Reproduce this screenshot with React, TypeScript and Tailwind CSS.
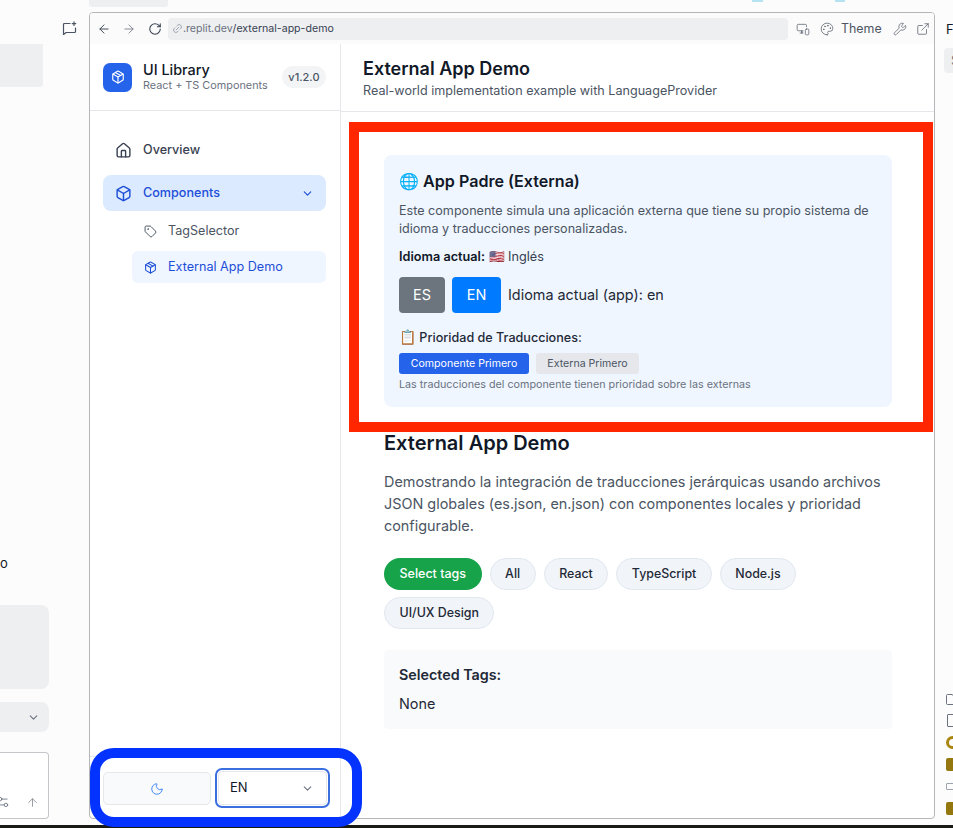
import { ArrowLeft, ArrowRight, RotateCw, Link2, MonitorSmartphone, Palette, Wrench, ExternalLink, Box, Package, House, ChevronDown, Tag, Moon, ArrowUp, Settings2 } from "lucide-react";

const tags = ["All", "React", "TypeScript", "Node.js", "UI/UX Design"];

export default function App() {
  return (
    <div className="relative h-[828px] w-[953px] overflow-hidden bg-[#fcfcfc] font-['Inter',sans-serif] text-[#111827]">
      <div className="flex h-[825px] w-full">
        <aside className="flex w-[89px] shrink-0 flex-col">
          <div className="flex h-[56px] items-start justify-end pt-[21px] pr-[12px]">
            <svg width="15" height="15" viewBox="0 0 15 15" fill="none" stroke="#4b5563" strokeWidth="1.2" strokeLinecap="round" strokeLinejoin="round">
              <path d="M8 2.5H2.5a1 1 0 0 0-1 1v10l2.6-2h8.4a1 1 0 0 0 1-1V7" />
              <path d="M12 .8v3.6M10.2 2.6h3.6" />
            </svg>
          </div>
          <div className="-mt-[12px] h-[43px] w-[43px] rounded-br-[3px] bg-[#eeeff1]" />
          <p className="mt-[468px] text-[13px] leading-[16px] text-[#111827]">o</p>
          <div className="mt-[34px] h-[84px] w-[49px] rounded-r-[8px] bg-[#eeeff1]" />
          <div className="mt-[13px] flex h-[30px] w-[49px] items-center justify-end rounded-r-[8px] bg-[#eeeff1] pr-[9px]">
            <ChevronDown size={13} className="text-[#6b7280]" />
          </div>
          <div className="mt-[20px] flex h-[67px] w-[49px] items-end justify-end gap-[16px] rounded-r-[4px] border border-l-0 border-[#c4c6c9] bg-white pr-[9px] pb-[9px]">
            <Settings2 size={14} strokeWidth={1.5} className="shrink-0 text-[#6b7280]" />
            <ArrowUp size={13} strokeWidth={1.6} className="shrink-0 text-[#8b8f96]" />
          </div>
        </aside>

        <div className="flex w-[846px] shrink-0 flex-col">
          <div className="relative h-[12px] shrink-0">
            <div className="h-[7px] w-[79px] rounded-b-[3px] bg-[#eeeff1]" />
            <div className="absolute left-[663px] top-0 h-[2px] w-[11px] bg-[#b5e3f2]" />
            <div className="absolute left-[746px] top-0 h-[2px] w-[10px] bg-[#b5e3f2]" />
          </div>
          <main className="flex h-[807px] flex-col overflow-hidden rounded-[4px] border border-[#b4b6b8] bg-white">
            <div className="flex h-[31px] shrink-0 items-center bg-[#fbfbfb] pl-[7px]">
              <ArrowLeft size={14} strokeWidth={1.6} className="shrink-0 text-[#374151]" />
              <ArrowRight size={14} strokeWidth={1.4} className="ml-[11px] shrink-0 text-[#6b7280]" />
              <RotateCw size={14} strokeWidth={1.8} className="ml-[12px] shrink-0 text-[#374151]" />
              <div className="ml-[6px] flex h-[22px] w-[620px] shrink-0 items-center rounded-[4px] bg-[#eeeff1] pl-[4px] text-[10.6px]">
                <Link2 size={11} className="-rotate-45 text-[#9ca3af]" />
                <span className="text-[#6b7280]">.replit.dev</span>
                <span className="text-[#374151]">/external-app-demo</span>
              </div>
              <MonitorSmartphone size={14} strokeWidth={1.2} className="ml-[8px] shrink-0 text-[#4b5563]" />
              <Palette size={14} strokeWidth={1.2} className="ml-[10px] shrink-0 text-[#4b5563]" />
              <span className="ml-[7px] pt-[2px] text-[12.4px] text-[#4b5563]">Theme</span>
              <Wrench size={14} strokeWidth={1.2} className="ml-[11px] shrink-0 text-[#4b5563]" />
              <ExternalLink size={14} strokeWidth={1.2} className="ml-[9px] shrink-0 text-[#4b5563]" />
            </div>

            <div className="flex min-h-0 flex-1">
              <nav className="flex w-[251px] shrink-0 flex-col border-r border-[#e5e7eb]">
                <div className="flex h-[67px] shrink-0 items-center justify-between border-b border-[#e5e7eb] pl-[13px] pr-[14px]">
                  <div className="flex items-center">
                    <div className="flex h-[29px] w-[29px] items-center justify-center rounded-[7px] bg-[#2563eb]">
                      <Package size={14} className="text-white" />
                    </div>
                    <div className="ml-[11px] -mt-[2px]">
                      <p className="text-[14.4px] leading-[17px] font-medium">UI Library</p>
                      <p className="text-[10.85px] leading-[14px] text-[#6b7280]">React + TS Components</p>
                    </div>
                  </div>
                  <span className="flex h-[22px] items-center rounded-full bg-[#f3f4f6] px-[6.5px] text-[11px] font-medium text-[#4b5563]">v1.2.0</span>
                </div>
                <div className="flex flex-1 flex-col pl-[13px] pr-[14px] pt-[21px]">
                  <div className="flex h-[36px] items-center pl-[12px] text-[12.6px] font-medium text-[#374151]">
                    <House size={17} strokeWidth={2} />
                    <span className="ml-[11px]">Overview</span>
                  </div>
                  <div className="mt-[7px] flex h-[36px] items-center rounded-[8px] bg-[#dbeafe] px-[12px] text-[12.6px] font-medium text-[#1d4ed8]">
                    <Box size={17} strokeWidth={2} />
                    <span className="ml-[11px] flex-1">Components</span>
                    <ChevronDown size={13} />
                  </div>
                  <div className="ml-[29px] mt-[4px] flex h-[32px] items-center pl-[12px] text-[12.6px] text-[#4b5563]">
                    <Tag size={13} strokeWidth={1.8} className="-rotate-[0deg]" />
                    <span className="ml-[11px]">TagSelector</span>
                  </div>
                  <div className="ml-[29px] mt-[4px] flex h-[32px] items-center rounded-[6px] bg-[#eff6ff] pl-[12px] text-[12.6px] text-[#1d4ed8]">
                    <Package size={13} strokeWidth={1.9} />
                    <span className="ml-[11px]">External App Demo</span>
                  </div>
                </div>
                <div className="flex h-[62px] shrink-0 items-start gap-[4px] border-t border-[#e5e7eb] pl-[13px] pt-[15px]">
                  <div className="flex h-[33px] w-[108px] items-center justify-center rounded-[5px] border border-[#e5e7eb] bg-[#f9fafb]">
                    <Moon size={14} strokeWidth={1.6} className="text-[#3b82f6]" />
                  </div>
                  <div className="-mt-[4px] h-[40px] w-[115px] rounded-[7px] border-2 border-[#3b6fe0] bg-white p-px">
                    <div className="flex h-full items-center justify-between rounded-[4px] border border-[#e5e7eb] pl-[11px] pr-[12px] text-[13px] text-[#111827]">
                      <span>EN</span>
                      <ChevronDown size={13} className="text-[#6b7280]" />
                    </div>
                  </div>
                </div>
              </nav>

              <section className="min-w-0 flex-1">
                <header className="flex h-[68px] flex-col justify-center border-b border-[#e5e7eb] px-[22px]">
                  <h1 className="text-[18px] leading-[24px] font-semibold">External App Demo</h1>
                  <p className="mt-[2px] text-[12.6px] leading-[16px] text-[#4b5563]">Real-world implementation example with LanguageProvider</p>
                </header>
                <div className="pl-[43px] pr-[42px] pt-[43px]">
                  <div className="h-[252px] rounded-[8px] bg-[#eff6ff] px-[15px] pt-[15px]">
                    <h2 className="text-[16.1px] leading-[22px] font-semibold"><span className="text-[16px] font-normal">🌐</span> App Padre (Externa)</h2>
                    <p className="mt-[10px] text-[12.6px] leading-[17.5px] text-[#4b5563]">Este componente simula una aplicación externa que tiene su propio sistema de idioma y traducciones personalizadas.</p>
                    <p className="mt-[11px] text-[12.7px] leading-[18px] text-[#374151]"><strong className="font-semibold text-[#111827]">Idioma actual:</strong> 🇺🇸 Inglés</p>
                    <div className="mt-[11px] flex items-center">
                      <span className="flex h-[36px] w-[46px] items-center justify-center rounded-[4px] bg-[#6c757d] text-[14.4px] text-white">ES</span>
                      <span className="ml-[7px] flex h-[36px] w-[49px] items-center justify-center rounded-[4px] bg-[#007bff] text-[14.4px] text-white">EN</span>
                      <span className="ml-[7px] text-[14.4px] text-[#1f2937]">Idioma actual (app): en</span>
                    </div>
                    <p className="mt-[15px] text-[12.6px] leading-[18px] font-medium text-[#1f2937]"><span className="text-[14px] font-normal">📋</span> Prioridad de Traducciones:</p>
                    <div className="mt-[6px] flex gap-[7px]">
                      <span className="flex h-[21px] w-[130px] items-center justify-center rounded-[3px] bg-[#2563eb] text-[10.6px] text-white">Componente Primero</span>
                      <span className="flex h-[21px] w-[103px] items-center justify-center rounded-[3px] bg-[#e5e7eb] text-[10.6px] text-[#4b5563]">Externa Primero</span>
                    </div>
                    <p className="mt-[3px] text-[10.75px] leading-[15px] text-[#6b7280]">Las traducciones del componente tienen prioridad sobre las externas</p>
                  </div>
                  <h2 className="mt-[22px] text-[20px] leading-[28px] font-semibold">External App Demo</h2>
                  <p className="mt-[14px] text-[14.4px] leading-[22px] text-[#4b5563]">Demostrando la integración de traducciones jerárquicas usando archivos JSON globales (es.json, en.json) con componentes locales y prioridad configurable.</p>
                  <div className="mt-[21px] flex flex-wrap gap-x-[8px] gap-y-[7px]">
                    <span className="flex h-[32px] items-center rounded-full bg-[#16a34a] px-[15.5px] text-[12.5px] font-medium text-white">Select tags</span>
                    {tags.map((t) => (
                      <span key={t} className="flex h-[32px] items-center rounded-full border border-[#e2e8f0] bg-[#f1f5f9] px-[14.5px] text-[12.4px] font-medium text-[#1f2937]">{t}</span>
                    ))}
                  </div>
                  <div className="mt-[21px] h-[79px] rounded-[4px] bg-[#f9fafb] px-[15px] pt-[14px]">
                    <p className="text-[14.3px] leading-[21px] font-semibold text-[#1f2937]">Selected Tags:</p>
                    <p className="mt-[8px] text-[14.4px] leading-[21px] text-[#1f2937]">None</p>
                  </div>
                </div>
              </section>
            </div>
          </main>
        </div>

        <aside className="flex min-w-0 flex-1 flex-col pl-[11px] pt-[21px] text-[13px]">
          <p className="leading-[16px]">F</p>
          <div className="-ml-[2px] mt-[11px] h-[25px] w-[20px] rounded-l-[4px] bg-[#eeeff1] pl-[7px] leading-[25px] text-[#6b7280]">S</div>
          <div className="mt-[621px] flex w-[14px] flex-col items-start gap-[9px]">
            <svg width="10" height="11" viewBox="0 0 10 11" fill="none" stroke="#6b7280"><path d="M.5 1.5a1 1 0 0 1 1-1H6l3.5 3V10.5h-8a1 1 0 0 1-1-1z" /></svg>
            <div className="ml-px h-[13px] w-[10px] rounded-[1px] border border-[#6b7280]" />
            <div className="h-[13px] w-[13px] rounded-full border-[3px] border-[#a8860f]" />
            <div className="h-[13px] w-[13px] rounded-[2px] bg-[#94780f]" />
            <div className="mt-[3px] h-[7px] w-[12px] rounded-[1px] border border-[#9ca3af]" />
            <div className="mt-[3px] h-[13px] w-[13px] rounded-[2px] bg-[#94780f]" />
          </div>
        </aside>
      </div>
      <div className="h-[3px] w-full bg-[#1a1a14]" />

      <div className="absolute left-[349px] top-[122px] h-[310px] w-[584px] border-[10px] border-[#ff2600]" />
      <div className="absolute left-[90px] top-[748px] h-[79px] w-[272px] rounded-[24px] border-[10px] border-[#0433ff]" />
    </div>
  );
}
